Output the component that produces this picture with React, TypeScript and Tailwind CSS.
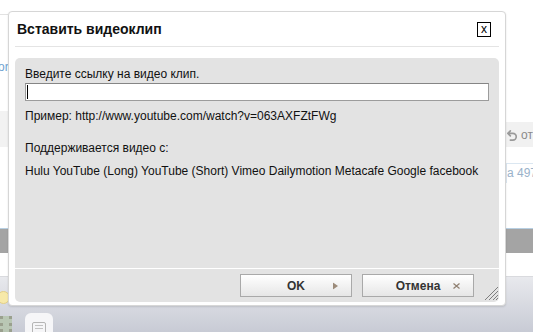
import React from "react";

const SERVICES = [
  "Hulu",
  "YouTube (Long)",
  "YouTube (Short)",
  "Vimeo",
  "Dailymotion",
  "Metacafe",
  "Google",
  "facebook",
];

function PageBehind() {
  return (
    <>
      <div className="flex h-[228px]">
        <div className="w-[8px] shrink-0">
          <div className="h-[15px] border-b border-[#e2e2e2]" />
          <div className="mt-[45px] ml-[-2px] leading-[15px] text-[#6fa3d0]">or</div>
          <div className="mt-[36px] h-[36px] bg-[#f2f2f2]" />
        </div>
        <div className="flex-1" />
        <div className="w-[27px] shrink-0 overflow-hidden">
          <div className="mt-[122px] flex h-[25px] items-center gap-[4px] bg-[#f1f1f1] pl-[1px] text-[#8a8a8a]">
            <svg width="12" height="14" viewBox="0 0 12 14" fill="none">
              <path
                d="M4 2 L1 5 L4 8 M1 5 H7 A4 4 0 0 1 7 13 H4"
                stroke="#9a9a9a"
                strokeWidth="2"
                strokeLinecap="round"
                strokeLinejoin="round"
              />
            </svg>
            <span className="leading-none">от</span>
          </div>
          <div className="mt-[16px] h-[20px] whitespace-nowrap border-l border-t border-[#dbe7f1] leading-[19px] text-[#9ab2ca]">
            а 497
          </div>
        </div>
      </div>
      <div className="h-[25px] border-t border-[#b7cfe2] bg-[#a4a4a4]" />
      <div className="h-[23px]" />
      <div className="flex h-[56px] flex-col border-t border-[#d9dade] bg-gradient-to-b from-[#e8e9ed] to-[#c8cbd5]">
        <div className="h-[29px] pt-[14px]">
          <div className="ml-[-3px] h-[13px] w-[13px] rounded-full border border-[#e3cf86] bg-[#f7e9a9]" />
        </div>
        <div className="flex flex-1 items-end">
          <div className="h-[16px] w-[12px] border-x-[3px] border-dotted border-[#9aa08e] bg-[#b9c7b4]" />
          <div className="ml-[13px] flex h-[19px] w-[28px] items-end justify-center rounded-t-[6px] bg-[#f6f6f8]">
            <div className="mb-[-2px] flex h-[12px] w-[14px] flex-col gap-[2px] rounded-[2px] border border-[#b5b5b5] px-[2px] pt-[2px]">
              <div className="h-px bg-[#c2c2c2]" />
              <div className="h-px bg-[#c2c2c2]" />
            </div>
          </div>
        </div>
      </div>
    </>
  );
}

function DialogButton({ label, icon }: { label: string; icon: React.ReactNode }) {
  return (
    <button className="relative flex h-[23px] w-[112px] items-center justify-center border border-[#a9a9a9] bg-gradient-to-b from-white to-[#e6e6e6] text-[12px] font-bold text-[#333]">
      {label}
      <span className="absolute right-[13px] top-1/2 -translate-y-1/2">{icon}</span>
    </button>
  );
}

export default function App() {
  return (
    <div className="relative h-[332px] w-[533px] overflow-hidden bg-white font-['Liberation_Sans',Arial,sans-serif] text-[12px]">
      <PageBehind />

      <div className="absolute left-[8px] top-[11px] flex h-[295px] w-[498px] flex-col rounded-[4px] border border-[#d6d6d6] bg-white px-[6px] shadow-[0_1px_2px_rgba(0,0,0,0.12)]">
        <div className="flex h-[34px] items-center justify-between pl-[2px] pr-[8px]">
          <h2 className="text-[14px] font-bold text-[#111]">Вставить видеоклип</h2>
          <button className="flex h-[15px] w-[14px] items-center justify-center border border-black pb-px text-[12px] leading-none text-black">
            x
          </button>
        </div>
        <div className="h-px bg-[#e4e4e4]" />

        <div className="relative mt-[11px] flex h-[244px] flex-col rounded-[5px] bg-[#e3e3e3]">
          <div className="flex-1 px-[10px] pt-[9px] leading-[15px] text-[#111]">
            <p>Введите ссылку на видео клип.</p>
            <div className="relative mt-px h-[18px] border border-[#9c9c9c] border-t-[#858585] bg-white">
              <span className="absolute left-px top-px h-[14px] w-px bg-black" />
            </div>
            <p className="mt-[8px]">Пример: http://www.youtube.com/watch?v=063AXFZtFWg</p>
            <p className="mt-[17px]">Поддерживается видео с:</p>
            <p className="mt-[8px] whitespace-nowrap">{SERVICES.join(" ")}</p>
          </div>

          <div className="h-px bg-white" />
          <div className="flex h-[33px] items-start justify-end gap-[10px] pr-[25px] pt-[5px]">
            <DialogButton
              label="OK"
              icon={
                <svg width="5" height="7" viewBox="0 0 5 7">
                  <path d="M0 0 L5 3.5 L0 7 Z" fill="#9c8b7a" />
                </svg>
              }
            />
            <DialogButton
              label="Отмена"
              icon={
                <svg width="7" height="6" viewBox="0 0 7 6">
                  <path d="M0.5 0.5 L6.5 5.5 M6.5 0.5 L0.5 5.5" stroke="#8f7f70" strokeWidth="1.2" />
                </svg>
              }
            />
          </div>

          <svg
            className="absolute bottom-[2px] right-[1px]"
            width="14"
            height="14"
            viewBox="0 0 14 14"
          >
            <path
              d="M14 1 L1 14 M14 5 L5 14 M14 9 L9 14 M14 12 L12 14"
              stroke="#7e7e7e"
              strokeWidth="1"
            />
          </svg>
        </div>
      </div>
    </div>
  );
}
